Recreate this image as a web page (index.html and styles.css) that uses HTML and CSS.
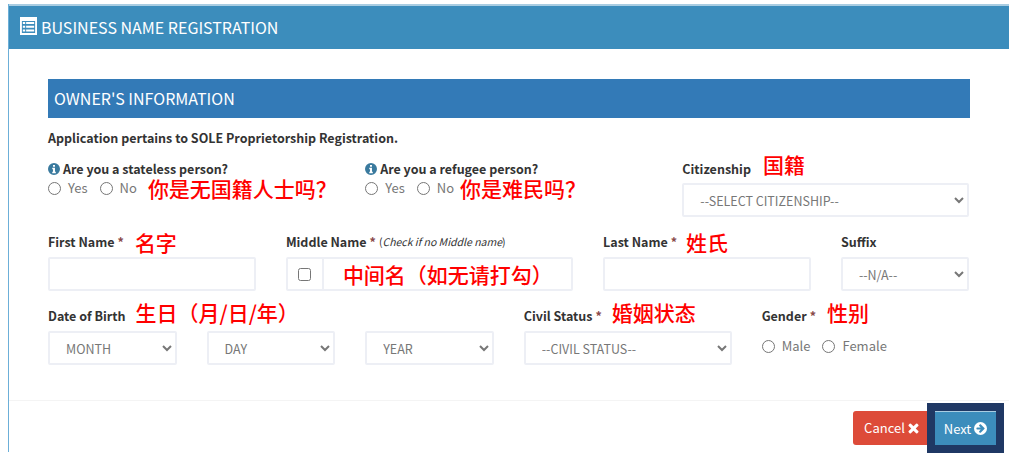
FILE: index.html
```html
<!DOCTYPE html>
<html lang="en">
<head>
<meta charset="utf-8">
<title>Business Name Registration</title>
<link rel="stylesheet" href="styles.css">
</head>
<body>
<div class="card">
  <div class="card-head">
    <svg class="head-icon" viewBox="0 0 18 18" width="17" height="18" preserveAspectRatio="none"><path fill="#fff" fill-rule="evenodd" d="M0 0h18v18H0zM2 4v12h14V4z"/><path fill="#fff" d="M3 5h2.500v2H3zM6.500 5H15v2H6.500zM3 8.800h2.500v2H3zM6.500 8.800H15v2H6.500zM3 12.500h2.500v2H3zM6.500 12.500H15v2H6.500z"/></svg>
    <h1>BUSINESS NAME REGISTRATION</h1>
  </div>
  <div class="card-body">
    <h2 class="section">OWNER'S INFORMATION</h2>
    <p class="note">Application pertains to SOLE Proprietorship Registration.</p>
    <div class="row row-one">
      <div class="col c4">
        <div class="label"><svg class="info" viewBox="0 0 16 16" width="12" height="12"><path fill="#3a7a9e" fill-rule="evenodd" d="M8 0a8 8 0 1 0 0 16A8 8 0 0 0 8 0zM6.700 2.500h2.600v2.400H6.700zM5.700 6.300h3.600v5.200h1.100v2H5.700v-2h1v-3.200h-1z"/></svg>Are you a stateless person?</div>
        <div class="radios">
          <label class="radio"><input type="radio" name="stateless">Yes</label>
          <label class="radio"><input type="radio" name="stateless">No</label>
          <span class="zh zh-q">你是无国籍人士吗&#xFF1F;</span>
        </div>
      </div>
      <div class="col c4">
        <div class="label"><svg class="info" viewBox="0 0 16 16" width="12" height="12"><path fill="#3a7a9e" fill-rule="evenodd" d="M8 0a8 8 0 1 0 0 16A8 8 0 0 0 8 0zM6.700 2.500h2.600v2.400H6.700zM5.700 6.300h3.600v5.200h1.100v2H5.700v-2h1v-3.200h-1z"/></svg>Are you a refugee person?</div>
        <div class="radios">
          <label class="radio"><input type="radio" name="refugee">Yes</label>
          <label class="radio"><input type="radio" name="refugee">No</label>
          <span class="zh zh-r">你是难民吗&#xFF1F;</span>
        </div>
      </div>
      <div class="col c4">
        <div class="label label-tight">Citizenship<span class="zh zh-c">国籍</span></div>
        <select class="field"><option>--SELECT CITIZENSHIP--</option></select>
      </div>
    </div>
    <div class="row row-two">
      <div class="col c3">
        <div class="label">First Name <span class="req">*</span><span class="zh zh-f">名字</span></div>
        <input class="field" type="text">
      </div>
      <div class="col c4">
        <div class="label">Middle Name <span class="req">*</span> <span class="hint">(<em>Check if no Middle name</em>)</span></div>
        <div class="group">
          <span class="addon"><input type="checkbox"></span>
          <span class="group-text zh">中间名&#xFF08;如无请打勾&#xFF09;</span>
        </div>
      </div>
      <div class="col c3">
        <div class="label">Last Name <span class="req">*</span><span class="zh zh-l">姓氏</span></div>
        <input class="field" type="text">
      </div>
      <div class="col c2">
        <div class="label">Suffix</div>
        <select class="field"><option>--N/A--</option></select>
      </div>
    </div>
    <div class="row row-three">
      <div class="col c6">
        <div class="label">Date of Birth<span class="zh zh-d">生日&#xFF08;月/日/年&#xFF09;</span></div>
        <div class="row">
          <div class="col c4"><select class="field"><option>MONTH</option></select></div>
          <div class="col c4"><select class="field"><option>DAY</option></select></div>
          <div class="col c4"><select class="field"><option>YEAR</option></select></div>
        </div>
      </div>
      <div class="col c3">
        <div class="label">Civil Status <span class="req">*</span><span class="zh zh-s">婚姻状态</span></div>
        <select class="field"><option>--CIVIL STATUS--</option></select>
      </div>
      <div class="col c3">
        <div class="label">Gender <span class="req">*</span><span class="zh zh-g">性别</span></div>
        <div class="radios gender">
          <label class="radio"><input type="radio" name="gender">Male</label>
          <label class="radio"><input type="radio" name="gender">Female</label>
        </div>
      </div>
    </div>
  </div>
  <div class="card-foot">
    <button class="btn cancel" type="button">Cancel <svg viewBox="0 0 12 12" width="11" height="11"><path fill="#fff" d="M3.200.8 6 3.600 8.800.8a1 1 0 0 1 1.400 0l1 1a1 1 0 0 1 0 1.400L8.400 6l2.800 2.800a1 1 0 0 1 0 1.400l-1 1a1 1 0 0 1-1.400 0L6 8.400l-2.800 2.800a1 1 0 0 1-1.400 0l-1-1a1 1 0 0 1 0-1.400L3.600 6 .8 3.200a1 1 0 0 1 0-1.400l1-1a1 1 0 0 1 1.400 0z"/></svg></button>
    <span class="highlight">
      <button class="btn next" type="button">Next <svg viewBox="0 0 16 16" width="13" height="13"><path fill="#fff" fill-rule="evenodd" d="M8 0a8 8 0 1 0 0 16A8 8 0 0 0 8 0zM8.200 2.900l4.600 4.400a1 1 0 0 1 0 1.400l-4.600 4.400a.8.800 0 0 1-1.100 0l-.7-.7a.8.800 0 0 1 0-1.100L8.300 9.200H3.800a.8.800 0 0 1-.8-.8V7.600a.8.800 0 0 1 .8-.8h4.500L6.400 5a.8.800 0 0 1 0-1.100l.7-.7a.8.800 0 0 1 1.100-.3z"/></svg></button>
    </span>
  </div>
</div>
</body>
</html>
```
FILE: styles.css
```css
* { box-sizing: border-box; }
html, body { margin: 0; padding: 0; background: #fff; }
body {
  font-family: "Noto Sans CJK SC", "Noto Sans", sans-serif;
  font-size: 13px;
  line-height: 20px;
  color: #333;
  height: 472px;
  overflow: hidden;
}
.card {
  margin: 4px 6px 0 8px;
  height: 448px;
  border-left: 1px solid #6cafd8;
  display: flex;
  flex-direction: column;
}
.card-head {
  height: 45px;
  background: #3c8dbc;
  border-top: 2px solid #a9cde2;
  display: flex;
  align-items: center;
  padding-left: 11px;
  color: #fff;
}
.head-icon { margin-right: 4px; margin-top: -4px; }
h1 { margin: 0; font-size: 16px; font-weight: 400; line-height: 24px; margin-top: -1px; }
.card-body { padding: 30px 39.500px 0 39px; height: 352px; border-bottom: 1px solid #f4f4f4; }
.section {
  margin: 0;
  height: 39px;
  background: #337ab7;
  color: #fff;
  font-size: 16px;
  font-weight: 400;
  line-height: 39px;
  padding-left: 6px;
}
.note { margin: 10px 0 0; font-size: 12.500px; font-weight: 700; line-height: 20px; color: #333; }
.row { display: flex; margin: 0 -15px; }
.col { padding: 0 15px; flex: none; }
.c2 { width: 16.6667%; }
.c3 { width: 25%; }
.c4 { width: 33.3333%; }
.c6 { width: 50%; }
.row-one { margin-top: 11px; }
.row-two { margin-top: 15px; }
.row-three { margin-top: 15px; }
.label { font-size: 12.500px; font-weight: 700; line-height: 20px; height: 20px; color: #333; white-space: nowrap; margin-bottom: 5px; display: flex; align-items: center; }
.row-one .c4:not(:last-child) .label { margin-bottom: -1px; }
.row-one .label-tight { margin-bottom: 4px; }
.req { color: #8a4b4b; margin-left: 3px; }
.hint { font-size: 10.500px; font-weight: 400; margin-left: 3px; }
.info { margin-right: 3px; }
.zh { color: #f00; font-size: 21px; font-weight: 500; line-height: 20px; font-family: "Noto Sans CJK SC", sans-serif; white-space: nowrap; }
.zh-c { margin-left: 12px; margin-top: -10px; }
.zh-f { margin-left: 11px; margin-top: -1px; }
.zh-l { margin-left: 9px; margin-top: -1px; }
.zh-d { margin-left: 10px; margin-top: -8px; }
.zh-s { margin-left: 10px; margin-top: -8px; }
.zh-g { margin-left: 11px; margin-top: -8px; }
.zh-q { margin-left: 11px; }
.zh-r { margin-left: 6px; }
.radios { display: flex; align-items: center; height: 20px; color: #777; font-size: 13px; }
.radio { display: flex; align-items: center; margin-right: 12px; }
.radio:nth-child(2) { margin-right: 0; }
.radio input { margin: 0 7px 0 0; width: 13px; height: 13px; }
.gender { margin-top: 10px; }
.gender .radio { margin-right: 12px; }
.field {
  display: block;
  width: 100%;
  height: 34px;
  border: 2px solid #edeff5;
  border-radius: 2px;
  background: #fff;
  color: #777;
  font: inherit;
  font-size: 12.500px;
  padding: 0 12px;
}
.group { display: flex; height: 34px; border: 2px solid #edeff5; border-radius: 2px; }
.addon { width: 36px; flex: none; border-right: 2px solid #edeff5; display: flex; align-items: center; justify-content: center; }
.addon input { margin: 0; width: 13px; height: 13px; }
.group-text { padding-left: 19px; display: flex; align-items: center; }
.card-foot { display: flex; justify-content: flex-end; align-items: flex-start; padding: 2px 5px 0 0; height: 51px; }
.btn { height: 34px; border: 0; color: #fff; font: inherit; font-size: 13px; display: flex; align-items: center; justify-content: center; gap: 3px; padding: 0; flex: none; }
.cancel { width: 77px; background: #dd4b39; border-radius: 3px; margin: 8px -3px 0 0; }
.highlight { background: #1f3864; padding: 8px; display: block; position: relative; flex: none; }
.next { width: 61px; background: #3c8dbc; border-top: 1px solid #a9cde2; }
```
